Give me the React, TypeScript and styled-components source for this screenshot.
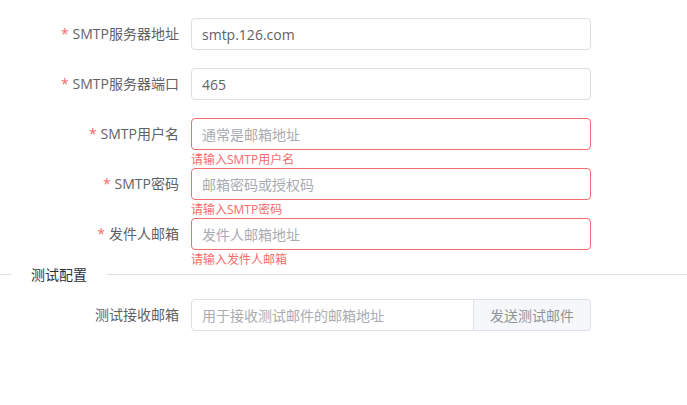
import React from "react";
import styled, { createGlobalStyle } from "styled-components";

const GlobalStyle = createGlobalStyle`
  html, body { margin: 0; padding: 0; background: #ffffff; }
  body {
    font-family: "Open Sans", "Noto Sans CJK SC", sans-serif;
    font-size: 14px;
    color: #606266;
  }
  * { box-sizing: border-box; }
`;

const Page = styled.div`
  width: 687px;
  height: 405px;
  padding-top: 18px;
  background: #ffffff;
  overflow: hidden;
`;

const FormItem = styled.div`
  position: relative;
  display: grid;
  grid-template-columns: 191px 400px;
  margin-bottom: 18px;
`;

const Label = styled.label`
  padding-right: 12px;
  text-align: right;
  line-height: 32px;
  height: 32px;
  font-size: 14px;
  color: #606266;
  white-space: nowrap;
`;

const Star = styled.span`
  color: #f56c6c;
  margin-right: 4px;
`;

const Input = styled.input<{ $error?: boolean; $append?: boolean }>`
  height: 32px;
  width: 100%;
  padding: 0 10px;
  border: 1px solid ${(p) => (p.$error ? "#f56c6c" : "#dcdfe6")};
  border-radius: ${(p) => (p.$append ? "4px 0 0 4px" : "4px")};
  font-family: inherit;
  font-size: 14px;
  color: #606266;
  background: #ffffff;
  outline: none;
  &::placeholder {
    color: #a8abb2;
  }
`;

const ErrorText = styled.div`
  position: absolute;
  top: 100%;
  left: 191px;
  padding-top: 4px;
  font-size: 12px;
  line-height: 1;
  color: #f56c6c;
  white-space: nowrap;
`;

const Divider = styled.div`
  display: flex;
  align-items: center;
  height: 13px;
  margin-bottom: 18px;
  &::before {
    content: "";
    width: 11px;
    height: 1px;
    background: #dcdfe6;
  }
  &::after {
    content: "";
    flex: 1;
    height: 1px;
    background: #dcdfe6;
  }
`;

const DividerText = styled.span`
  padding: 0 20px;
  font-size: 14px;
  line-height: 13px;
  color: #303133;
  white-space: nowrap;
`;

const InputGroup = styled.div`
  display: flex;
`;

const AppendButton = styled.button`
  flex: 0 0 117px;
  height: 32px;
  border: 1px solid #dcdfe6;
  border-left: none;
  border-radius: 0 4px 4px 0;
  background: #f5f7fa;
  color: #909399;
  font-family: inherit;
  font-size: 14px;
  padding: 0;
  cursor: pointer;
`;

type Field = {
  label: string;
  value?: string;
  placeholder?: string;
  error?: string;
};

const fields: Field[] = [
  { label: "SMTP服务器地址", value: "smtp.126.com" },
  { label: "SMTP服务器端口", value: "465" },
  { label: "SMTP用户名", placeholder: "通常是邮箱地址", error: "请输入SMTP用户名" },
  { label: "SMTP密码", placeholder: "邮箱密码或授权码", error: "请输入SMTP密码" },
  { label: "发件人邮箱", placeholder: "发件人邮箱地址", error: "请输入发件人邮箱" },
];

export default function App() {
  return (
    <>
      <GlobalStyle />
      <Page>
        {fields.map((f) => (
          <FormItem key={f.label}>
            <Label>
              <Star>*</Star>
              {f.label}
            </Label>
            <Input
              $error={!!f.error}
              defaultValue={f.value}
              placeholder={f.placeholder}
            />
            {f.error && <ErrorText>{f.error}</ErrorText>}
          </FormItem>
        ))}
        <Divider>
          <DividerText>测试配置</DividerText>
        </Divider>
        <FormItem>
          <Label>测试接收邮箱</Label>
          <InputGroup>
            <Input $append placeholder="用于接收测试邮件的邮箱地址" />
            <AppendButton>发送测试邮件</AppendButton>
          </InputGroup>
        </FormItem>
      </Page>
    </>
  );
}
